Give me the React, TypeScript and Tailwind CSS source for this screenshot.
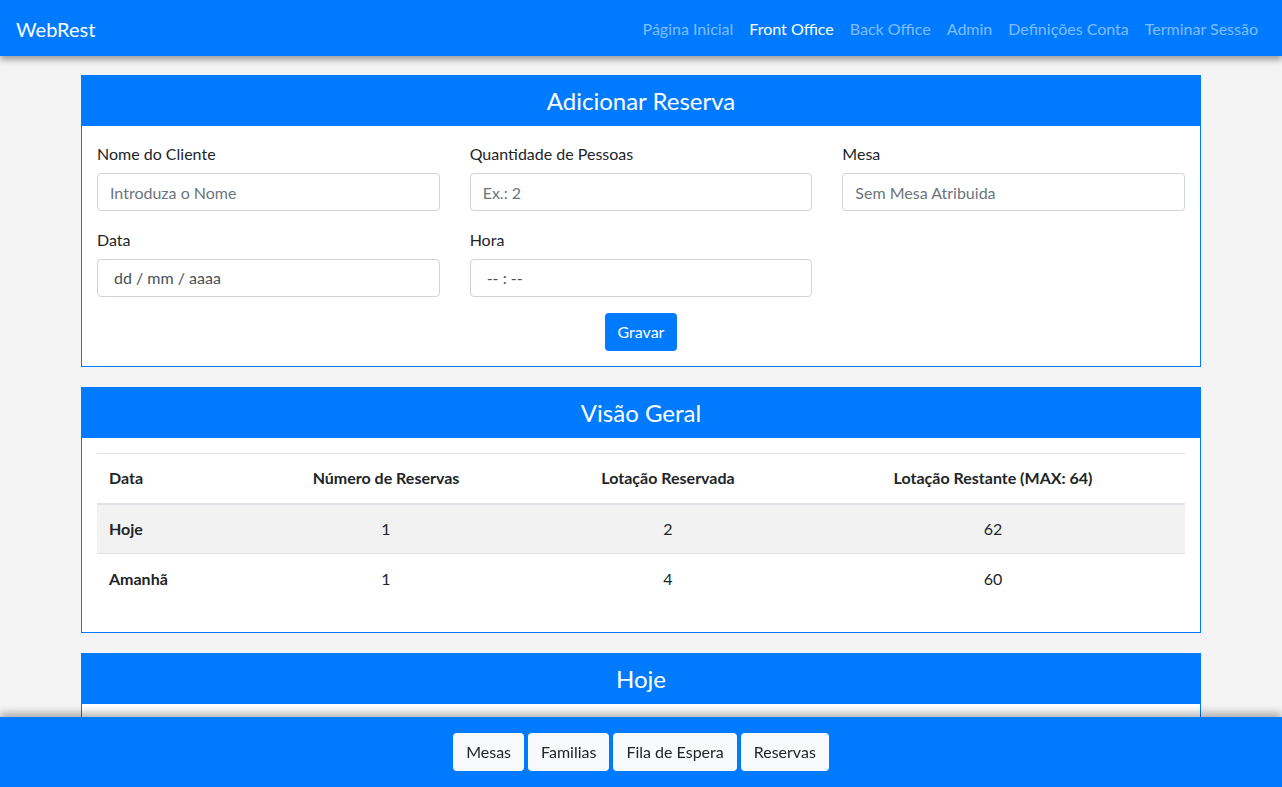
import React from 'react';

const NAV_LINKS = [
  { label: 'Página Inicial', active: false },
  { label: 'Front Office', active: true },
  { label: 'Back Office', active: false },
  { label: 'Admin', active: false },
  { label: 'Definições Conta', active: false },
  { label: 'Terminar Sessão', active: false },
];

const OVERVIEW = [
  { day: 'Hoje', reservas: 1, reservada: 2, restante: 62 },
  { day: 'Amanhã', reservas: 1, reservada: 4, restante: 60 },
];

const Card: React.FC<{ title: string; children: React.ReactNode; className?: string }> = ({ title, children, className }) => (
  <div className={`bg-white border border-[#007bff] ${className || ''}`}>
    <div className="bg-[#007bff] h-[50px] flex items-center justify-center">
      <h3 className="text-white text-[24px] leading-none">{title}</h3>
    </div>
    {children}
  </div>
);

const Field: React.FC<{ label: string; placeholder?: string; value?: string }> = ({ label, placeholder, value }) => (
  <div className="flex flex-col">
    <label className="text-[16px] text-[#212529] leading-6 mb-[7px]">{label}</label>
    {value ? (
      <div className="h-[38px] border border-[#ced4da] rounded-[4px] px-[16px] flex items-center text-[16px] text-[#495057]">{value}</div>
    ) : (
      <input
        placeholder={placeholder}
        className="h-[38px] border border-[#ced4da] rounded-[4px] px-[12px] text-[16px] text-[#495057] placeholder:text-[#6c757d] outline-none"
      />
    )}
  </div>
);

export default function App() {
  return (
    <div className="min-h-screen bg-[#f4f4f4] pb-[90px]" style={{ fontFamily: 'Lato, "Noto Sans", sans-serif' }}>
      {/* Navbar */}
      <nav className="h-[56px] bg-[#007bff] flex items-center justify-between px-[16px] shadow-[0_4px_6px_rgba(0,0,0,0.35)] relative z-10">
        <span className="text-white text-[20px] pt-[2px]">WebRest</span>
        <ul className="flex items-center pt-[2px]">
          {NAV_LINKS.map((l) => (
            <li key={l.label} className={`px-[8px] text-[16px] ${l.active ? 'text-white' : 'text-white/50'}`}>{l.label}</li>
          ))}
        </ul>
      </nav>

      <div className="w-[1120px] mx-auto pt-[19px] flex flex-col gap-[20px]">
        {/* Adicionar Reserva */}
        <Card title="Adicionar Reserva">
          <div className="px-[15px] pt-[16px] pb-[15px]">
            <div className="grid grid-cols-3 gap-x-[30px] gap-y-[17px]">
              <Field label="Nome do Cliente" placeholder="Introduza o Nome" />
              <Field label="Quantidade de Pessoas" placeholder="Ex.: 2" />
              <Field label="Mesa" placeholder="Sem Mesa Atribuida" />
              <Field label="Data" value="dd / mm / aaaa" />
              <Field label="Hora" value="-- : --" />
            </div>
            <div className="flex justify-center mt-[16px]">
              <button className="h-[38px] px-[13px] bg-[#007bff] text-white text-[16px] rounded-[4px]">Gravar</button>
            </div>
          </div>
        </Card>

        {/* Visão Geral */}
        <Card title="Visão Geral">
          <div className="px-[15px] pt-[15px] pb-[28px]">
            <table className="w-full text-[16px] text-[#212529] border-collapse">
              <colgroup>
                <col className="w-[140px]" />
                <col className="w-[298px]" />
                <col className="w-[266px]" />
                <col />
              </colgroup>
              <thead>
                <tr className="border-t border-[#dee2e6] border-b-2">
                  <th className="h-[50px] px-[12px] text-left font-bold">Data</th>
                  <th className="px-[12px] text-center font-bold">Número de Reservas</th>
                  <th className="px-[12px] text-center font-bold">Lotação Reservada</th>
                  <th className="px-[12px] text-center font-bold">Lotação Restante (MAX: 64)</th>
                </tr>
              </thead>
              <tbody>
                {OVERVIEW.map((r, i) => (
                  <tr key={r.day} className={`border-t border-[#dee2e6] ${i % 2 === 0 ? 'bg-[#f2f2f2]' : ''}`}>
                    <td className="h-[50px] px-[12px] font-bold">{r.day}</td>
                    <td className="px-[12px] text-center">{r.reservas}</td>
                    <td className="px-[12px] text-center">{r.reservada}</td>
                    <td className="px-[12px] text-center">{r.restante}</td>
                  </tr>
                ))}
              </tbody>
            </table>
          </div>
        </Card>

        {/* Hoje */}
        <Card title="Hoje">
          <div className="px-[15px] pt-[15px] pb-[28px]">
            <div className="h-[150px] border-t border-[#dee2e6]" />
          </div>
        </Card>
      </div>

      {/* Footer */}
      <footer className="fixed bottom-0 left-0 right-0 h-[70px] bg-[#007bff] flex items-center justify-center gap-[4px] shadow-[0_-4px_8px_rgba(0,0,0,0.3)] z-10">
        {['Mesas', 'Familias', 'Fila de Espera', 'Reservas'].map((b) => (
          <button key={b} className="h-[38px] px-[13px] bg-[#f8f9fa] text-[#212529] text-[16px] rounded-[4px]">{b}</button>
        ))}
      </footer>
    </div>
  );
}
